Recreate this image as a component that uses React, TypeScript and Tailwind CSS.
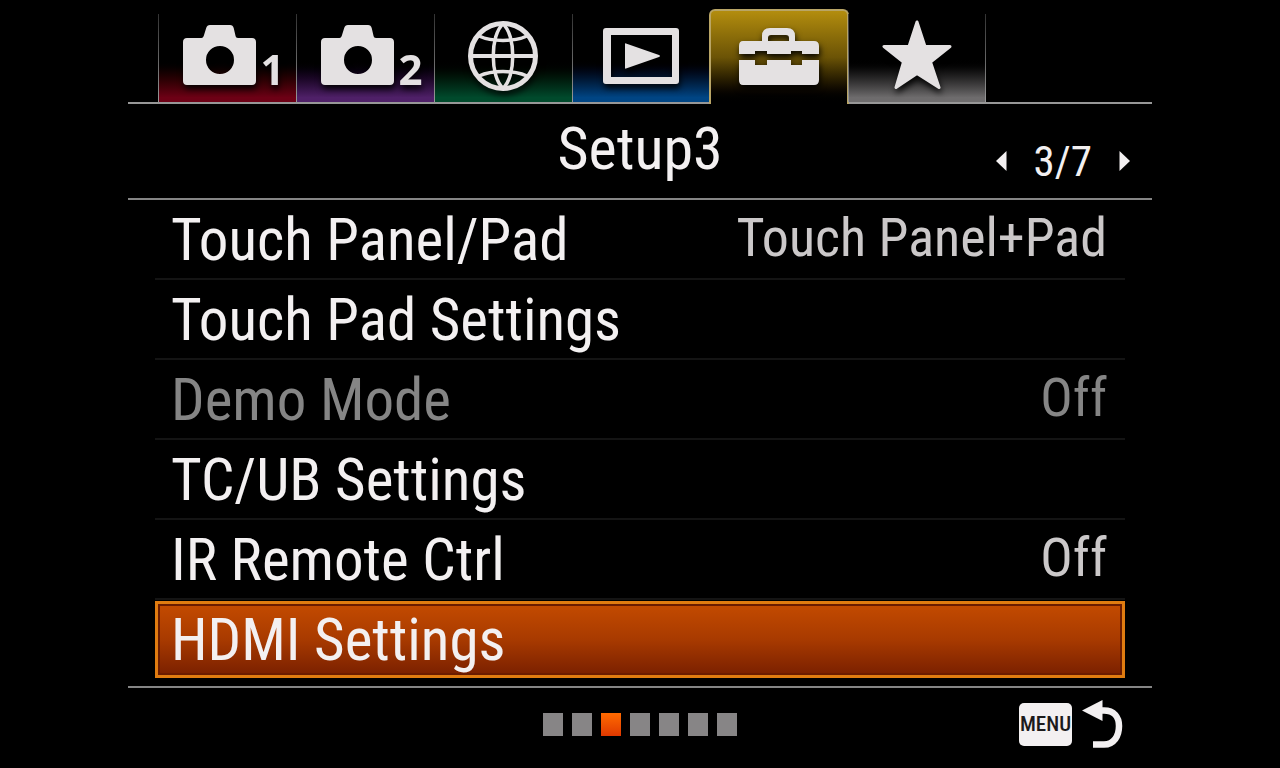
import type { ReactNode } from "react";

type Tab = { id: string; label: string; glow: string; inset: string; icon: ReactNode; digit?: string };

function CameraIcon() {
  return (
    <svg viewBox="0 0 73 60" className="h-[60px] w-[73px] shrink-0" fill="#e4e1e2" aria-hidden="true">
      <path
        fillRule="evenodd"
        d="M4 13H18.5C19.8 13 20.4 12 20.8 10.8L23.2 3C23.8 1 25 0 27 0H47C49 0 50.2 1 50.7 3L52.5 10.8C52.9 12.3 53.5 13 55 13H69C71.5 13 73 14.5 73 17V56C73 58.5 71.5 60 69 60H4C1.5 60 0 58.5 0 56V17C0 14.5 1.5 13 4 13ZM37 21A14 14 0 1 0 37 49A14 14 0 1 0 37 21Z"
      />
    </svg>
  );
}

function GlobeIcon() {
  return (
    <svg viewBox="0 0 70 70" className="size-[70px]" fill="none" stroke="#e4e1e2" aria-hidden="true">
      <circle cx="35" cy="35" r="32.5" strokeWidth="5" />
      <path d="M3 35H67" strokeWidth="4" />
      <path d="M35 3C22 14 22 56 35 67M35 3C48 14 48 56 35 67" strokeWidth="3.5" />
      <path d="M11 15C24 21 46 21 59 15M11 55C24 49 46 49 59 55" strokeWidth="3.5" />
    </svg>
  );
}

function PlaybackIcon() {
  return (
    <svg viewBox="0 0 76 56" className="h-[56px] w-[76px]" aria-hidden="true">
      <path
        fill="#e4e1e2"
        fillRule="evenodd"
        d="M3 0H73Q76 0 76 3V53Q76 56 73 56H3Q0 56 0 53V3Q0 0 3 0ZM8 7V49H69V7Z"
      />
      <path fill="#e4e1e2" d="M22 16Q22 15 23 15.4L56 27Q58 28 56 29L23 40.6Q22 41 22 40Z" />
    </svg>
  );
}

function ToolboxIcon() {
  return (
    <svg viewBox="0 0 80 57" className="h-[57px] w-[80px]" fill="#e4e1e2" aria-hidden="true">
      <path
        fillRule="evenodd"
        d="M4 13H23V8Q23 0 31 0H48Q56 0 56 8V13H75Q80 13 80 18V26H63V23H52V26H28V23H16V26H0V18Q0 13 4 13ZM29 13H50V10Q50 7 47 7H32Q29 7 29 10Z"
      />
      <path d="M0 32H16V37H28V32H52V37H63V32H80V52Q80 57 75 57H4Q0 57 0 52Z" />
    </svg>
  );
}

function StarIcon() {
  return (
    <svg viewBox="0 0 70 70" className="size-[70px]" fill="#e4e1e2" stroke="#e4e1e2" strokeLinejoin="round" strokeWidth="3" aria-hidden="true">
      <path d="M35 2L43 26.5H68L48.500 42L57 67.5L35 53.5L14 67.5L21.5 42L2 26.5H27Z" />
    </svg>
  );
}

const TABS: Tab[] = [
  { id: "cam1", label: "Camera settings 1", glow: "to-[#6d0015]", inset: "pb-[17px] pl-[14px]", icon: <CameraIcon />, digit: "1" },
  { id: "cam2", label: "Camera settings 2", glow: "to-[#4f2068]", inset: "pb-[17px] pl-[14px]", icon: <CameraIcon />, digit: "2" },
  { id: "network", label: "Network", glow: "to-[#004a2c]", inset: "pb-[11px]", icon: <GlobeIcon /> },
  { id: "playback", label: "Playback", glow: "to-[#004584]", inset: "pb-[18px]", icon: <PlaybackIcon /> },
  { id: "setup", label: "Setup", glow: "", inset: "pb-[19px]", icon: <ToolboxIcon /> },
  { id: "my", label: "My menu", glow: "to-[#6e6c6d]", inset: "pb-[12px]", icon: <StarIcon /> },
];

type Item = { label: string; value?: string; disabled?: boolean; selected?: boolean };

const ITEMS: Item[] = [
  { label: "Touch Panel/Pad", value: "Touch Panel+Pad" },
  { label: "Touch Pad Settings" },
  { label: "Demo Mode", value: "Off", disabled: true },
  { label: "TC/UB Settings" },
  { label: "IR Remote Ctrl", value: "Off" },
  { label: "HDMI Settings", selected: true },
];

const PAGES = [1, 2, 3, 4, 5, 6, 7];
const CURRENT_PAGE = 3;

function TabButton({ tab, active }: { tab: Tab; active: boolean }) {
  const shape = active
    ? "-mx-px h-[95px] w-[140px] rounded-t-md border-2 border-b-0 border-[#b9a566] bg-linear-to-b from-[#b38d0e] via-[#6b5306] via-50% to-black"
    : `mb-[2px] h-[88px] w-[138px] bg-linear-to-b from-black from-50% ${tab.glow} to-95%`;
  return (
    <button
      type="button"
      role="tab"
      aria-label={tab.label}
      aria-selected={active}
      className={`relative flex items-end justify-center ${shape}`}
    >
      {!active && <span className="absolute inset-y-0 left-0 w-px bg-linear-to-b from-[#333] to-[#999]" />}
      <span className={`flex items-end drop-shadow-[1px_4px_3px_rgba(0,0,0,0.9)] ${tab.inset}`}>
        {tab.icon}
        {tab.digit && (
          <span className="ml-[4px] h-[37px] font-['Open_Sans',sans-serif] text-[42px] leading-[42px] font-bold text-[#e4e1e2]">
            {tab.digit}
          </span>
        )}
      </span>
    </button>
  );
}

function MenuRow({ item }: { item: Item }) {
  const surface = item.selected
    ? "mt-px h-[77px] border-[3px] border-[#e07c10] bg-linear-to-b from-[#c44b00] via-[#a83a00] to-[#7a2000] pr-[14px] pl-[13px] shadow-[inset_0_0_0_2px_#6b1c00]"
    : "h-[80px] border-b-2 border-[#141414] pt-px pr-[18px] pl-[16px]";
  return (
    <li>
      <button
        type="button"
        disabled={item.disabled}
        aria-current={item.selected}
        className={`flex w-full items-center justify-between whitespace-nowrap ${surface}`}
      >
        <span className={`text-[59px] leading-[72px] ${item.disabled ? "text-[#858585]" : "text-[#f3f0f1]"}`}>{item.label}</span>
        {item.value && (
          <span className={`pb-1 text-[54px] leading-[64px] ${item.disabled ? "text-[#858585]" : "text-[#cbc8c9]"}`}>
            {item.value}
          </span>
        )}
      </button>
    </li>
  );
}

function PageArrow({ direction }: { direction: "previous" | "next" }) {
  return (
    <button type="button" aria-label={`${direction} page`}>
      <svg viewBox="0 0 11 20" className="h-[20px] w-[11px]" fill="#f3f0f1" aria-hidden="true">
        <path d={direction === "previous" ? "M10.5 0V20L0 10Z" : "M0.5 0V20L11 10Z"} />
      </svg>
    </button>
  );
}

export default function App() {
  return (
    <main className="min-h-screen overflow-hidden bg-black font-['Roboto_Condensed','Liberation_Sans',sans-serif]">
      <div className="mx-auto w-4/5">
        <div role="tablist" className="flex items-end bg-linear-to-t from-[#979797] from-[2px] to-transparent to-[2px] pt-[9px] pl-[30px]">
          {TABS.map((tab) => (
            <TabButton key={tab.id} tab={tab} active={tab.id === "setup"} />
          ))}
          <span className="relative mb-[2px] -ml-px h-[88px] w-px bg-linear-to-b from-[#333] to-[#999]" />
        </div>

        <header className="grid h-[96px] grid-cols-[1fr_auto_1fr] items-center border-b-2 border-[#858585] text-[#f3f0f1]">
          <h1 className="col-start-2 pb-1 text-[60px] leading-[72px]">Setup3</h1>
          <nav aria-label="Pages" className="flex items-center gap-[27px] justify-self-end pt-[20px] pr-[22px]">
            <PageArrow direction="previous" />
            <span className="text-[43px] leading-[52px]">
              {CURRENT_PAGE}/{PAGES.length}
            </span>
            <PageArrow direction="next" />
          </nav>
        </header>

        <ul className="mx-[27px] pb-[8px]">
          {ITEMS.map((item) => (
            <MenuRow key={item.label} item={item} />
          ))}
        </ul>

        <footer className="grid grid-cols-[1fr_auto_1fr] items-center border-t-2 border-[#858585] pt-[12px]">
          <div className="col-start-2 flex gap-[9px]">
            {PAGES.map((page) => (
              <span
                key={page}
                className={`h-[23px] w-[20px] ${page === CURRENT_PAGE ? "bg-linear-to-b from-[#ff6a00] to-[#e03800]" : "bg-[#878586]"}`}
              />
            ))}
          </div>
          <button type="button" className="flex items-center gap-[10px] justify-self-end pr-[29px]">
            <span className="flex h-[43px] w-[53px] items-center justify-center rounded-[5px] bg-[#f3f0f1] text-[21px] leading-[28px] font-medium text-[#1c1a1b]">
              MENU
            </span>
            <svg viewBox="0 0 41 48" className="h-[48px] w-[41px]" fill="none" aria-hidden="true">
              <path d="M19 10.5H22C32 10.5 37 17 37 26C37 36 32 44.5 22 44.5H11" stroke="#f3f0f1" strokeWidth="6.5" />
              <path d="M0 10.5L20.5 0V21Z" fill="#f3f0f1" />
            </svg>
          </button>
        </footer>
      </div>
    </main>
  );
}
